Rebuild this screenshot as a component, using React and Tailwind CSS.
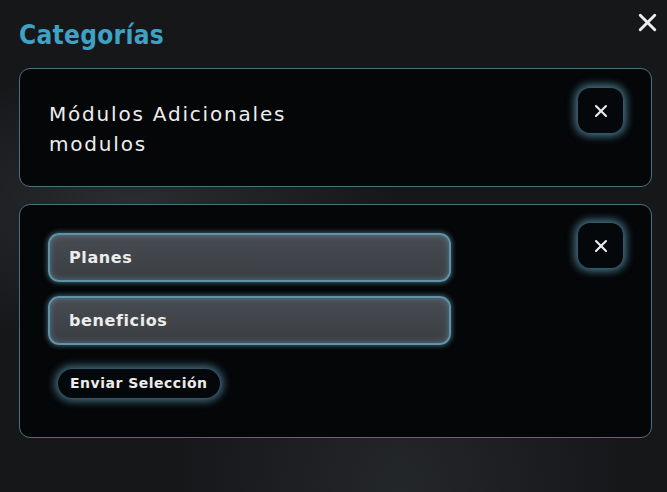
import React from 'react';
import { X } from 'lucide-react';

const font = { fontFamily: '"DejaVu Sans", "Liberation Sans", sans-serif' };
const condensed = { fontFamily: '"DejaVu Sans Condensed", "DejaVu Sans", "Liberation Sans Narrow", sans-serif' };

function CloseBox() {
  return (
    <button className="w-[45px] h-[45px] shrink-0 rounded-[12px] bg-[#05080a] flex items-center justify-center shadow-[0_0_8px_3px_rgba(98,160,186,0.75)]">
      <X className="w-5 h-5 text-[#ececec]" strokeWidth={2.5} />
    </button>
  );
}

function Option({ label }) {
  return (
    <div className="h-[49px] w-[403px] rounded-[11px] bg-[linear-gradient(180deg,#474c52_0%,#3a3e43_100%)] border-2 border-[#5f93a8] shadow-[0_0_5px_1px_rgba(95,150,172,0.6),inset_0_0_6px_rgba(120,180,205,0.45)] flex items-center px-[19px]">
      <span className="text-[16px] text-[#ececec] font-bold tracking-[0.6px]">{label}</span>
    </div>
  );
}

export default function App() {
  return (
    <div
      style={font}
      className="w-[667px] h-[492px] overflow-hidden bg-[#151719] bg-[radial-gradient(ellipse_at_20%_42%,#2a2d31_0%,transparent_35%),radial-gradient(ellipse_at_60%_100%,#24272a_0%,transparent_40%)] pl-[19px] pr-[15px] pt-[18px] relative"
    >
      <X className="absolute right-[5px] top-[8px] w-[29px] h-[29px] text-[#ededed]" strokeWidth={2.4} />
      <h1 style={condensed} className="text-[26px] leading-[34px] text-[#3ea2c6] font-bold tracking-[0.3px] mb-[16px]">Categorías</h1>

      <div className="flex flex-col gap-[17px]">
        <div className="h-[119px] rounded-[11px] border border-[#4c6f80] bg-[#040608] flex justify-between pl-[29px] pr-[28px] pt-[19px]">
          <div className="pt-[11px] text-[20px] leading-[30px] text-[#eeeeee] tracking-[1.8px]">
            <div>Módulos Adicionales</div>
            <div>modulos</div>
          </div>
          <CloseBox />
        </div>

        <div className="h-[234px] rounded-[11px] border border-[#4c6f80] bg-[#040608] flex justify-between pl-[28px] pr-[28px] pt-[18px]">
          <div className="flex flex-col gap-[14px] pt-[10px]">
            <Option label="Planes" />
            <Option label="beneficios" />
            <div className="pt-[10px] pl-[10px]">
              <button className="h-[29px] px-[12px] rounded-full bg-[#05080a] text-[14px] text-[#ececec] font-bold tracking-[0.5px] shadow-[0_0_8px_3px_rgba(98,160,186,0.7)]">
                Enviar Selección
              </button>
            </div>
          </div>
          <CloseBox />
        </div>
      </div>
    </div>
  );
}
